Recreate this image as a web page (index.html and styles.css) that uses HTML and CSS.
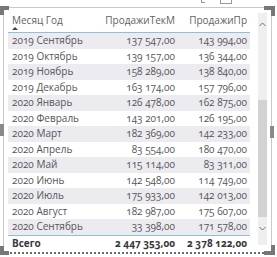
FILE: index.html
```html
<!DOCTYPE html>
<html lang="ru">
<head>
<meta charset="utf-8">
<link rel="stylesheet" href="styles.css">
</head>
<body>
<div class="header-icons">
  <span class="icon-tick"></span>
  <span class="icon-box"></span>
</div>
<div class="visual">
  <span class="handle tl-h"></span><span class="handle tl-v"></span>
  <span class="handle tr-h"></span><span class="handle tr-v"></span>
  <span class="handle bl-h"></span><span class="handle bl-v"></span>
  <span class="handle br-h"></span><span class="handle br-v"></span>
  <span class="handle ml"></span><span class="handle mr"></span>
  <div class="content">
    <div class="table">
      <div class="row head">
        <div class="cell c1"><span class="htext">Месяц Год</span><span class="sort"></span></div>
        <div class="cell c2"><span class="htext">ПродажиТекМ</span></div>
        <div class="cell c3"><span class="htext">ПродажиПр</span></div>
      </div>
      <div class="row odd"><div class="cell c1">2019 Сентябрь</div><div class="cell c2">137 547,00</div><div class="cell c3">143 994,00</div></div>
      <div class="row"><div class="cell c1">2019 Октябрь</div><div class="cell c2">139 157,00</div><div class="cell c3">136 344,00</div></div>
      <div class="row odd"><div class="cell c1">2019 Ноябрь</div><div class="cell c2">158 289,00</div><div class="cell c3">138 840,00</div></div>
      <div class="row"><div class="cell c1">2019 Декабрь</div><div class="cell c2">163 174,00</div><div class="cell c3">157 796,00</div></div>
      <div class="row odd"><div class="cell c1">2020 Январь</div><div class="cell c2">126 478,00</div><div class="cell c3">162 875,00</div></div>
      <div class="row"><div class="cell c1">2020 Февраль</div><div class="cell c2">143 201,00</div><div class="cell c3">126 195,00</div></div>
      <div class="row odd"><div class="cell c1">2020 Март</div><div class="cell c2">182 369,00</div><div class="cell c3">142 233,00</div></div>
      <div class="row"><div class="cell c1">2020 Апрель</div><div class="cell c2">83 554,00</div><div class="cell c3">180 470,00</div></div>
      <div class="row odd"><div class="cell c1">2020 Май</div><div class="cell c2">115 114,00</div><div class="cell c3">83 311,00</div></div>
      <div class="row"><div class="cell c1">2020 Июнь</div><div class="cell c2">142 548,00</div><div class="cell c3">114 749,00</div></div>
      <div class="row odd"><div class="cell c1">2020 Июль</div><div class="cell c2">175 933,00</div><div class="cell c3">142 013,00</div></div>
      <div class="row"><div class="cell c1">2020 Август</div><div class="cell c2">182 987,00</div><div class="cell c3">175 607,00</div></div>
      <div class="row odd"><div class="cell c1">2020 Сентябрь</div><div class="cell c2">33 398,00</div><div class="cell c3">171 578,00</div></div>
      <div class="row total"><div class="cell c1">Всего</div><div class="cell c2">2 447 353,00</div><div class="cell c3">2 378 122,00</div></div>
    </div>
    <div class="scrollbar">
      <div class="arrow">
        <svg width="7" height="5" viewBox="0 0 7 5"><polyline points="0.5,4 3.5,1 6.5,4" fill="none" stroke="#6f6f6f" stroke-width="1"/></svg>
      </div>
      <div class="track"><div class="thumb"></div></div>
      <div class="arrow">
        <svg width="7" height="5" viewBox="0 0 7 5"><polyline points="0.5,1 3.5,4 6.5,1" fill="none" stroke="#6f6f6f" stroke-width="1"/></svg>
      </div>
    </div>
  </div>
</div>
</body>
</html>
```
FILE: styles.css
```css
html, body {
  margin: 0;
  padding: 0;
  background: #ffffff;
}
body {
  width: 277px;
  height: 257px;
  overflow: hidden;
  position: relative;
  font-family: "Open Sans", "Lato", "DejaVu Sans", sans-serif;
  font-size: 10px;
  font-variant-numeric: oldstyle-nums;
  font-feature-settings: "onum" 1;
  color: #57555b;
}
.header-icons {
  position: absolute;
  left: 0;
  top: 0;
  width: 277px;
  height: 4px;
}
.icon-tick {
  position: absolute;
  left: 201px;
  top: 0;
  width: 3px;
  height: 2px;
  border-left: 1px solid #9a9a9a;
  border-bottom: 1px solid #9a9a9a;
}
.icon-box {
  position: absolute;
  left: 220px;
  top: -6px;
  width: 10px;
  height: 8px;
  border: 1px solid #9a9a9a;
}
.visual {
  position: relative;
  box-sizing: border-box;
  margin: 7px 0 0 3px;
  width: 269px;
  height: 247px;
  border-top: 1px solid #c9c9c9;
  border-left: 1px solid #c9c9c9;
  border-right: 1px solid #c9c9c9;
  border-bottom: 2px dotted #6a6a6a;
}
.handle {
  position: absolute;
  background: #777777;
}
.tl-h { left: -4px; top: -2px; width: 9px; height: 4px; }
.tl-v { left: -4px; top: -2px; width: 4px; height: 9px; }
.tr-h { right: -4px; top: -2px; width: 11px; height: 4px; }
.tr-v { right: -4px; top: -2px; width: 4px; height: 10px; }
.bl-h { left: -4px; bottom: -3px; width: 9px; height: 4px; }
.bl-v { left: -4px; bottom: -3px; width: 4px; height: 9px; }
.br-h { right: -4px; bottom: -3px; width: 11px; height: 4px; }
.br-v { right: -4px; bottom: -3px; width: 4px; height: 10px; }
.ml { left: -4px; top: 116px; width: 4px; height: 12px; background: #8a8a8a; }
.mr { right: -3px; top: 118px; width: 4px; height: 12px; background: #8a8a8a; }

.content {
  display: flex;
  padding: 0 4px 0 4px;
  height: 244px;
}
.table {
  width: 242px;
  display: flex;
  flex-direction: column;
}
.row {
  display: grid;
  grid-template-columns: 100px 70px 72px;
  height: 15.5px;
  line-height: 15.5px;
}
.row.odd {
  background: #ecebef;
}
.cell {
  white-space: nowrap;
  overflow: hidden;
}
.c1 { padding-left: 4px; }
.c2 { text-align: right; padding-right: 3px; }
.c3 { text-align: right; padding-right: 3px; }
.row.head {
  height: 24px;
  border-bottom: 1px solid #8cc2d8;
  line-height: 12px;
  color: #636167;
}
.row.head .cell {
  display: flex;
  flex-direction: column;
  padding-top: 6px;
  overflow: visible;
}
.row.head .c2, .row.head .c3 { align-items: flex-end; }
.sort {
  margin-top: 1px;
  width: 0;
  height: 0;
  border-left: 3px solid transparent;
  border-right: 3px solid transparent;
  border-bottom: 3px solid #444;
}
.row.total {
  border-top: 1px solid #8cc2d8;
  height: 15.5px;
  line-height: 15.5px;
  font-weight: bold;
  color: #3a383e;
}
.scrollbar {
  margin-left: auto;
  margin-top: 5px;
  width: 9px;
  height: 229px;
  background: #efefef;
  display: flex;
  flex-direction: column;
  padding-bottom: 3px;
}
.arrow {
  height: 22px;
  display: flex;
  align-items: center;
  justify-content: center;
}
.track {
  padding-top: 65px;
}
.thumb {
  height: 117px;
  background: #d2d2d2;
}
```
